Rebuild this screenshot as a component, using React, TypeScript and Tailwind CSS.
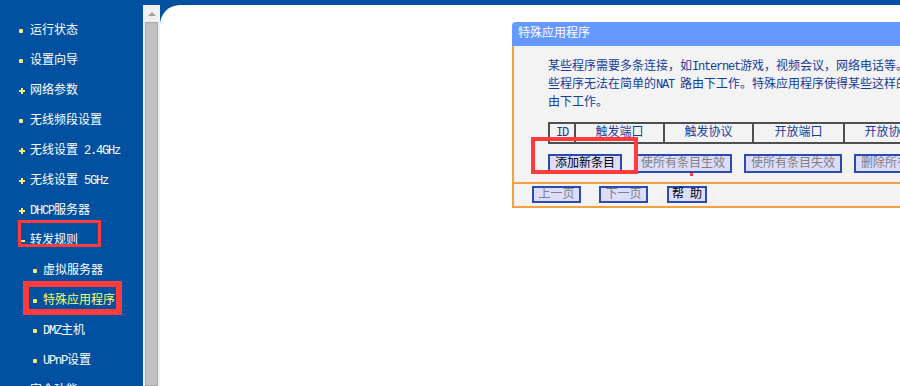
import React from 'react'

type Marker = 'dot' | 'plus' | 'minus'

interface NavItem {
  label: string
  marker: Marker
  sub?: boolean
  active?: boolean
}

const navItems: NavItem[] = [
  { label: '运行状态', marker: 'dot' },
  { label: '设置向导', marker: 'dot' },
  { label: '网络参数', marker: 'plus' },
  { label: '无线频段设置', marker: 'dot' },
  { label: '无线设置 2.4GHz', marker: 'plus' },
  { label: '无线设置 5GHz', marker: 'plus' },
  { label: 'DHCP服务器', marker: 'plus' },
  { label: '转发规则', marker: 'minus' },
  { label: '虚拟服务器', marker: 'dot', sub: true },
  { label: '特殊应用程序', marker: 'dot', sub: true, active: true },
  { label: 'DMZ主机', marker: 'dot', sub: true },
  { label: 'UPnP设置', marker: 'dot', sub: true },
  { label: '安全功能', marker: 'plus' },
]

// latin runs are half width (6px) next to the 12px CJK glyphs
function T({ text }: { text: string }) {
  const parts = text.split(/([\x20-\x7e]+)/)
  return (
    <>
      {parts.map((p, i) =>
        /^[\x20-\x7e]+$/.test(p) ? (
          <span key={i} className="whitespace-pre tracking-[-1.2px]">
            {p}
          </span>
        ) : (
          <React.Fragment key={i}>{p}</React.Fragment>
        )
      )}
    </>
  )
}

function MarkerIcon({ type }: { type: Marker }) {
  if (type === 'plus') {
    return (
      <svg width="6" height="6" viewBox="0 0 6 6" className="block">
        <rect x="2" y="0" width="2" height="6" fill="#ffec70" />
        <rect x="0" y="2" width="6" height="2" fill="#ffec70" />
      </svg>
    )
  }
  if (type === 'minus') {
    return (
      <svg width="6" height="6" viewBox="0 0 6 6" className="block">
        <rect x="0" y="2" width="6" height="2" fill="#ffec70" />
      </svg>
    )
  }
  return <span className="block h-[4px] w-[4px] rounded-[1px] bg-[#ffec70]" />
}

function Sidebar() {
  return (
    <div className="relative w-[143px] shrink-0 pt-[16px]">
      {navItems.map((item) => (
        <div
          key={item.label}
          className={`flex h-[30px] items-center ${item.sub ? 'pl-[33px]' : 'pl-[19px]'}`}
        >
          <span className={`flex items-center ${item.sub ? 'w-[10px]' : 'w-[11px]'}`}>
            <MarkerIcon type={item.marker} />
          </span>
          <span
            className={`whitespace-pre text-[12px] leading-none ${
              item.active ? 'text-[#ffff66]' : 'text-white'
            }`}
          >
            <T text={item.label} />
          </span>
        </div>
      ))}
      {/* annotation boxes */}
      <div className="absolute left-[18px] top-[220px] h-[27px] w-[83px] border-[3px] border-[#ff3b3b]" />
      <div className="absolute left-[23px] top-[281px] h-[34px] w-[99px] border-[6px] border-[#ff3b3b]" />
    </div>
  )
}

function Scrollbar() {
  return (
    <div className="mt-[5px] flex w-[17px] shrink-0 flex-col bg-[#f0f0f0]">
      <div className="flex h-[17px] items-center justify-center">
        <svg width="8" height="4" viewBox="0 0 8 4">
          <polygon points="0,4 8,4 4,0" fill="#a3a3a3" />
        </svg>
      </div>
      <div className="ml-[2px] mr-[2px] flex-1 border border-[#a9a9a9] bg-[#c1c1c1]" />
    </div>
  )
}

function Btn({ children, active, className = 'px-[5px]' }: { children: React.ReactNode; active?: boolean; className?: string }) {
  return (
    <button
      className={`flex items-center justify-center whitespace-pre border-2 border-[#2b4bb0] bg-[#dcdcfb] text-[12px] leading-none ${
        active ? 'text-black' : 'text-[#808080]'
      } ${className}`}
    >
      {children}
    </button>
  )
}

const columns = [
  { label: 'ID', w: 'w-[26px]' },
  { label: '触发端口', w: 'w-[89px]' },
  { label: '触发协议', w: 'w-[89px]' },
  { label: '开放端口', w: 'w-[91px]' },
  { label: '开放协议', w: 'w-[89px]' },
  { label: '状态', w: 'w-[60px]' },
]

function Panel() {
  return (
    <div className="ml-[352px] mt-[17px] w-[640px] shrink-0">
      <div className="flex h-[24px] items-center rounded-tl-[4px] bg-[#6699ff] pl-[6px] text-[12px] leading-none text-white">
        特殊应用程序
      </div>
      <div className="border-b-2 border-l-2 border-[#f4a040] bg-[#f3f3f3]">
        <div className="whitespace-nowrap pl-[34px] pt-[12px] text-[12px] leading-[18px] text-[#163c9c]">
          <div>
            <T text="某些程序需要多条连接，如Internet游戏，视频会议，网络电话等。由于防火墙的存在，这" />
          </div>
          <div>
            <T text="些程序无法在简单的NAT 路由下工作。特殊应用程序使得某些这样的应用程序能够在NAT路" />
          </div>
          <div>由下工作。</div>
        </div>
        <table className="ml-[34px] mt-[10px] table-fixed border-collapse">
          <tbody>
            <tr>
              {columns.map((c) => (
                <td
                  key={c.label}
                  className={`${c.w} h-[20px] border-2 border-[#4f4f4f] p-0 text-center text-[12px] leading-none text-[#163c9c]`}
                >
                  <T text={c.label} />
                </td>
              ))}
            </tr>
          </tbody>
        </table>
        <div className="ml-[34px] mt-[10px] flex h-[19px] gap-[12px]">
          <Btn active>添加新条目</Btn>
          <Btn>使所有条目生效</Btn>
          <Btn>使所有条目失效</Btn>
          <Btn>删除所有条目</Btn>
        </div>
        <div className="mt-[9px] border-t-2 border-[#f4a040] pb-[3px] pl-[18px] pt-[2px]">
          <div className="flex h-[17px] items-stretch">
            <Btn className="w-[49px] px-0">上一页</Btn>
            <Btn className="ml-[18px] w-[49px] px-0">下一页</Btn>
            <Btn active className="ml-[19px] w-[40px] px-0">
              帮<span className="tracking-[-1.2px]"> </span>助
            </Btn>
          </div>
        </div>
      </div>
    </div>
  )
}

export default function App() {
  return (
    <div className="flex h-[386px] w-[900px] overflow-hidden bg-[#0151a0] font-['Liberation_Mono','Noto_Sans_CJK_SC',monospace]">
      <Sidebar />
      <Scrollbar />
      <div className="relative mt-[5px] flex-1 overflow-hidden rounded-tl-[20px] bg-white">
        <Panel />
        {/* annotation box around the add button */}
        <div className="absolute left-[371px] top-[132px] h-[37px] w-[107px] border-4 border-[#ff3b3b]" />
        <div className="absolute left-[530px] top-[168px] h-[3px] w-[3px] bg-[#ff3b3b]" />
      </div>
    </div>
  )
}
